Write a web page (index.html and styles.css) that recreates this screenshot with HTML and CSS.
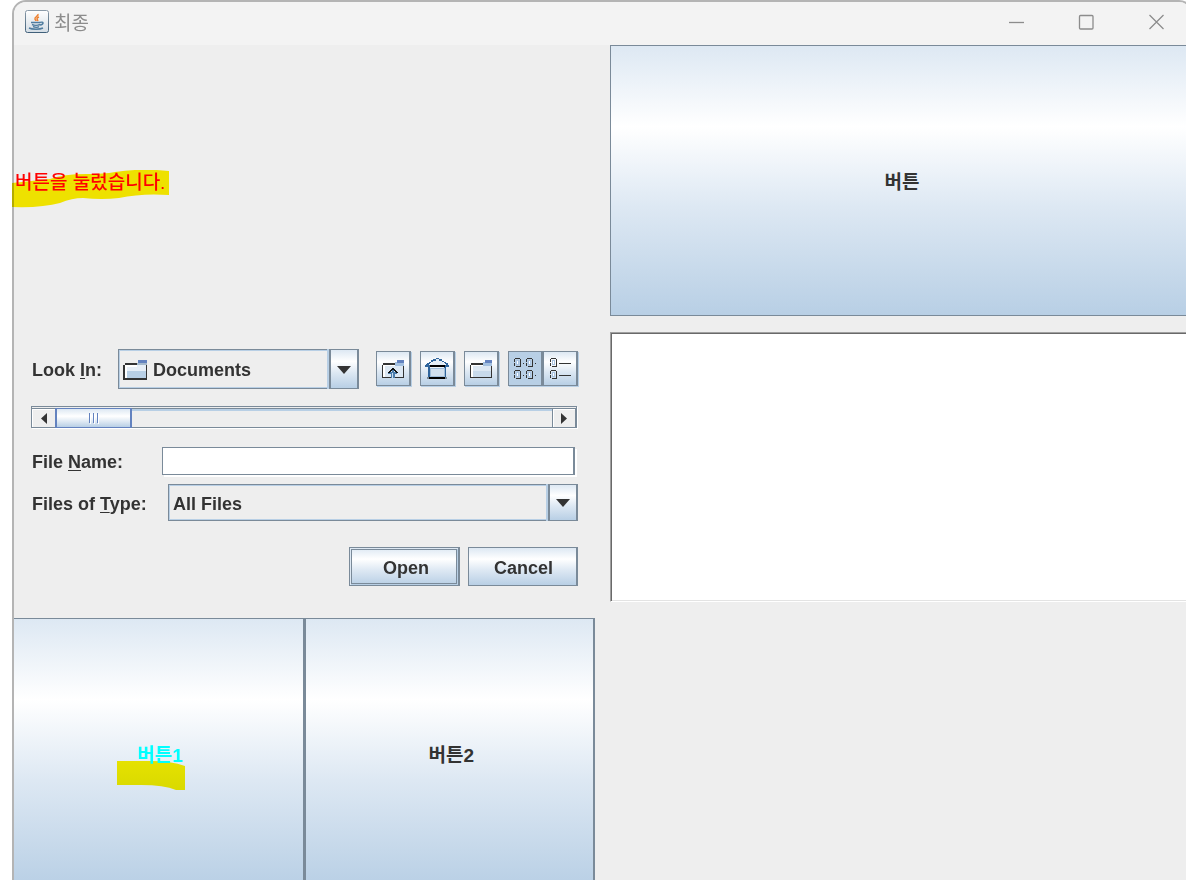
FILE: index.html
```
<!DOCTYPE html>
<html lang="ko">
  <head>
    <meta charset="UTF-8" />
    <meta name="viewport" content="width=device-width, initial-scale=1.0" />
    <title>최종</title>
    <link rel="stylesheet" href="styles.css">
  </head>

  <body>
    <div class="window">
      <header class="titlebar">
        <svg class="app-icon" width="24" height="24" viewBox="0 0 24 24" fill="none">
          <defs>
            <linearGradient id="tile" x1="0" y1="0" x2="0" y2="1">
              <stop offset="0" stop-color="#fff" />
              <stop offset="1" stop-color="#d3dce4" />
            </linearGradient>
            <linearGradient id="tileEdge" x1="0" y1="0" x2="0" y2="1">
              <stop offset="0" stop-color="#8a9aa8" />
              <stop offset="1" stop-color="#40607a" />
            </linearGradient>
          </defs>
          <rect x="0.5" y="0.5" width="23" height="22" rx="2" fill="url(#tile)" stroke="url(#tileEdge)" />
          <path d="M13 4c1 2-4 3-3 5 0 1 1 1 1 2M14 7c-3 1-2 2-1 4" stroke="#ee8130" stroke-width="1.5" />
          <path d="M6 12.500h9M7 14.500c2 1 6 1 8 0M8 16.500c2 1 5 1 6 0M15 12.500c4-1.500 4 2 0 2.500M4 18c3 1.500 11 1.500 14 0" stroke="#4f7c9f" stroke-width="1.500" />
        </svg>
        <h1 class="title">최종</h1>
        <div class="window-controls">
          <button type="button" aria-label="Minimize">
            <svg width="16" height="16" viewBox="0 0 16 16"><path d="M1 8.500h15" /></svg>
          </button>
          <button type="button" aria-label="Maximize">
            <svg width="16" height="16" viewBox="0 0 16 16"><rect x="1.500" y="1.500" width="13.500" height="13.500" rx="1" /></svg>
          </button>
          <button type="button" aria-label="Close">
            <svg width="16" height="16" viewBox="0 0 16 16"><path d="M1.500 1l14 14M15.500 1l-14 14" /></svg>
          </button>
        </div>
      </header>

      <main class="content">
        <div class="message">
          <svg class="marker marker-message" width="158" height="38" viewBox="0 0 158 38">
            <path d="M0 13L38 9Q52 4 74 4Q92 4 103 2Q130-2 157 1V25Q130 23 107 28Q90 30 71 28Q60 28 48 33Q30 38 0 37Z" />
          </svg>
          <p>버튼을 눌렀습니다.</p>
        </div>

        <button type="button" class="big-button">버튼</button>

        <form class="chooser">
          <div class="row row-look">
            <label for="look"><span>Look <u>I</u>n:</span></label>
            <div class="combo combo-look">
              <svg class="combo-icon" width="24" height="20" viewBox="0 0 24 20" shape-rendering="crispEdges">
                <rect x="2" y="5" width="21" height="13" fill="#e6eef7" />
                <path d="M3 11h20v7H3z" fill="#b8cfe5" />
                <path d="M2 5h12v2H4v11H2z" fill="#fff" />
                <path d="M2 3h12v2H2v13h21V5h1v15H0V5h2z" fill="#333" />
                <path d="M15 0h9v3h-9z" fill="#6382bf" />
                <path d="M14 3h10v2H14z" fill="#a3b8cc" />
              </svg>
              <select id="look">
                <option>Documents</option>
              </select>
              <span class="combo-arrow"></span>
            </div>
            <div class="tools">
              <button type="button" class="metal tool" aria-label="Up One Level">
                <svg width="22" height="18" viewBox="0 0 22 18" shape-rendering="crispEdges">
                  <path d="M1 5h20v12H1z" fill="#dde8f3" />
                  <path d="M1 5h13v1H3v11H1z" fill="#fff" />
                  <path d="M1 3h12v2H1zM0 5h1v12h8v1H0zM21 6h1v12h-9v-1h8z" fill="#333" />
                  <path d="M15 0h7v3h-7z" fill="#6382bf" />
                  <path d="M13 2h2v1h7v3h-9z" fill="#a3c0e0" />
                  <path d="M10 10h2v2h3v2h-2v4H9v-4H6v-2h4z" fill="#4b7cab" />
                  <path d="M10 13h1v5h-1z" fill="#c8ddef" />
                  <path d="M10 8h2v1h1v1h1v1h1v1h1v1h-2v-1h-1v-1h-1v-1h-2v1H9v1H8v1H6v-1h1v-1h1v-1h1V9h1z" fill="#111" />
                </svg>
              </button>
              <button type="button" class="metal tool" aria-label="Home">
                <svg width="24" height="21" viewBox="0 0 24 21" shape-rendering="crispEdges">
                  <path d="M10 1h5l5 6H5z" fill="#e4edf6" />
                  <path d="M11 0h3v1h-3zM8 1h3v2H8zM14 1h3v2h-3zM6 2h2v2H6zM17 3h2v1h-2zM4 4h2v1H4zM19 4h2v1h-2zM2 5h3v1H2zM20 5h3v1h-3zM1 6h3v1H1zM21 6h2v1h-2zM0 7h5v2H0zM20 7h4v2h-4zM3 9h2v10H3zM19 9h2v10h-2z" fill="#30659c" />
                  <path d="M5 10h14v8H5z" fill="#d1e0ee" stroke="#a0bedb" />
                  <path d="M5 7h15v2H5zM4 19h16v2H4z" fill="#000" />
                  <path d="M2 19h2v2H2zM20 19h2v2h-2z" fill="#7a8a99" />
                </svg>
              </button>
              <button type="button" class="metal tool" aria-label="Create New Folder">
                <svg width="22" height="18" viewBox="0 0 22 18" shape-rendering="crispEdges">
                  <path d="M1 5h20v12H1z" fill="#dde8f3" />
                  <path d="M3 11h18v6H3z" fill="#c8daeb" />
                  <path d="M1 5h13v1H3v11H1z" fill="#fff" />
                  <path d="M1 3h12v2H1zM0 5h1v12h20V6h1v12H0z" fill="#333" />
                  <path d="M15 0h7v3h-7z" fill="#6382bf" />
                  <path d="M13 2h2v1h7v3h-9z" fill="#a3c0e0" />
                </svg>
              </button>
              <div class="view-toggle">
                <button type="button" class="metal tool pressed" aria-label="List" aria-pressed="true">
                  <svg width="23" height="21" viewBox="0 0 23 21" shape-rendering="crispEdges">
                    <defs>
                      <g id="file">
                        <path d="M2 2h3v5H2z" fill="#a9c4e2" />
                        <path d="M3 3h1v3H3z" fill="#fff" />
                        <path d="M1 0h5v1H1zM0 1h1v3H0zM0 5h1v3H0zM6 1h1v7H6zM2 8h5v1H2z" fill="#333" />
                      </g>
                    </defs>
                    <use href="#file" />
                    <use href="#file" x="12" />
                    <use href="#file" y="12" />
                    <use href="#file" x="12" y="12" />
                    <path d="M9 5h1v1H9zM21 5h1v1h-1zM9 17h1v1H9zM21 17h1v1h-1z" fill="#333" />
                  </svg>
                </button>
                <button type="button" class="metal tool" aria-label="Details" aria-pressed="false">
                  <svg width="21" height="21" viewBox="0 0 21 21" shape-rendering="crispEdges">
                    <use href="#file" />
                    <use href="#file" y="12" />
                    <path d="M9 5h12v1H9zM9 17h12v1H9z" fill="#333" />
                  </svg>
                </button>
              </div>
            </div>
          </div>

          <div class="scrollbar">
            <button type="button" class="scroll-button" aria-label="Scroll left">
              <svg width="6" height="11" viewBox="0 0 6 11"><path d="M6 0v11L0 5.500z" /></svg>
            </button>
            <div class="track">
              <div class="thumb"><i></i><i></i><i></i></div>
            </div>
            <button type="button" class="scroll-button scroll-right" aria-label="Scroll right">
              <svg width="6" height="11" viewBox="0 0 6 11"><path d="M0 0v11l6-5.500z" /></svg>
            </button>
          </div>

          <div class="row row-name">
            <label for="name"><span>File <u>N</u>ame:</span></label>
            <input type="text" id="name" />
          </div>

          <div class="row row-type">
            <label for="type"><span>Files of <u>T</u>ype:</span></label>
            <div class="combo combo-type">
              <select id="type">
                <option>All Files</option>
              </select>
              <span class="combo-arrow"></span>
            </div>
          </div>

          <div class="actions">
            <button type="button" class="metal action default">Open</button>
            <button type="button" class="metal action">Cancel</button>
          </div>
        </form>

        <textarea class="editor" aria-label="텍스트"></textarea>

        <div class="button-pair">
          <button type="button" class="big-button clicked">
            <svg class="marker marker-button" width="68" height="30" viewBox="0 0 68 30">
              <path d="M0 0H34Q54 0 68 5V29H59Q47 24 24 24H0Z" />
            </svg>
            <span>버튼1</span>
          </button>
          <button type="button" class="big-button">버튼2</button>
        </div>
      </main>
    </div>
  </body>
</html>
```
FILE: styles.css
```
* {
  box-sizing: border-box;
}

body {
  margin: 0;
  height: 100vh;
  overflow: hidden;
  background: #fff;
  color: #333;
  font-family: "Liberation Sans", "Noto Sans CJK KR", sans-serif;
  font-size: 18px;
  font-weight: bold;
}

button,
input,
select,
textarea {
  margin: 0;
  padding: 0;
  border: 0;
  border-radius: 0;
  background: none;
  color: inherit;
  font: inherit;
}

/* The frame runs a little past the right and bottom edges of the screen */
.window {
  display: flex;
  flex-direction: column;
  height: calc(100vh + 11px);
  margin: 0 -7px 0 12px;
  border: 2px solid #b4b4b4;
  border-radius: 14px 14px 0 0;
  background: #eee;
}

.titlebar {
  display: flex;
  align-items: center;
  height: 43px;
  padding: 0 0 3px 11px;
  border-radius: 12px 12px 0 0;
  background: #f3f3f3;
}

.title {
  flex: 1;
  margin: 0 0 0 5px;
  color: #8c8c8c;
  font-family: "Noto Sans CJK KR", sans-serif;
  font-size: 19px;
  font-weight: 400;
  line-height: 24px;
}

.window-controls {
  display: flex;
}

.window-controls button {
  display: flex;
  align-items: center;
  justify-content: center;
  width: 70px;
  height: 40px;
}

.window-controls svg {
  fill: none;
  stroke: #8c8c8c;
  stroke-width: 1.3;
}

.content {
  display: grid;
  flex: 1;
  grid-template-columns: 1fr 1fr;
  grid-template-rows: repeat(3, minmax(0, 1fr));
  gap: 16px 15px;
}

.message {
  position: relative;
  display: flex;
  align-items: center;
  color: #f00;
  font-size: 19px;
  font-weight: 500;
}

.message p {
  position: relative;
  margin: 0;
  padding-left: 1px;
}

/* Highlighter strokes */
.marker {
  position: absolute;
  fill: #fff200;
  mix-blend-mode: multiply;
}

.marker-message {
  top: calc(50% - 10px);
  left: -2px;
}

.marker-button {
  top: calc(50% + 7px);
  left: 103px;
}

.metal,
.big-button,
.combo-arrow {
  border: 1px solid #7a8a99;
  border-right-width: 2px;
  background: linear-gradient(#dde8f3, #fff 30%, #dde8f3 60%, #b8cfe5);
}

.big-button {
  position: relative;
  padding-left: 4px;
  font-size: 19px;
  font-weight: 600;
}

.button-pair {
  display: grid;
  grid-template-columns: 1fr 1fr;
}

.button-pair .big-button:first-child {
  border-left: 0;
}

.clicked span {
  position: relative;
  color: #0ff;
}

.chooser {
  display: flex;
  flex-direction: column;
  padding: 17px 17px 0;
}

.row {
  display: flex;
  align-items: center;
  padding-left: 1px;
}

.row label {
  margin-right: 16px;
  padding-top: 4px;
  white-space: nowrap;
}

.row u {
  text-underline-offset: 2px;
  text-decoration-thickness: 1px;
}

.row-look {
  height: 40px;
}

.combo {
  position: relative;
  display: flex;
  flex: 1;
  align-items: center;
  min-width: 0;
  border: 1px solid #7a8a99;
  box-shadow: inset 1px 1px #b8cfe5, inset 0 -1px #b8cfe5;
}

.combo-look {
  height: 40px;
}

.combo-type {
  height: 37px;
}

.combo-icon {
  margin: 2px 0 0 4px;
}

.combo select {
  flex: 1;
  min-width: 0;
  height: 100%;
  padding: 3px 0 0 4px;
  appearance: none;
}

.combo-look select {
  padding-left: 6px;
}

.combo-arrow {
  position: absolute;
  top: -1px;
  right: -1px;
  bottom: -1px;
  width: 30px;
  border-left-width: 2px;
  box-shadow: -2px 0 #b8cfe5;
  pointer-events: none;
}

.combo-arrow::after {
  content: "";
  position: absolute;
  top: calc(50% - 3px);
  left: 6px;
  border: 7px solid transparent;
  border-top: 8px solid #333;
  border-bottom: 0;
}

.tools {
  display: flex;
  gap: 9px;
  margin-left: 17px;
}

.view-toggle {
  display: flex;
}

.tool {
  display: flex;
  align-items: center;
  justify-content: center;
  width: 35px;
  height: 35px;
  box-shadow: 1px 1px #b8cfe5;
}

.pressed {
  background: #b8cfe5;
}

.scrollbar {
  display: flex;
  height: 22px;
  margin: 17px 1px 0 0;
  padding-top: 1px;
  border: 1px solid #7a8a99;
  box-shadow: 1px 1px #fff;
}

.scroll-button {
  display: flex;
  align-items: center;
  justify-content: center;
  width: 23px;
  padding-top: 1px;
  border-top: 1px solid #7a8a99;
  box-shadow: inset 1px 1px #fff;
  fill: #333;
}

.scroll-right {
  width: 24px;
  border-right: 1px solid #7a8a99;
  border-left: 1px solid #7a8a99;
}

.track {
  flex: 1;
  border-top: 1px solid #7a8a99;
  box-shadow: inset 0 2px #b8cfe5;
}

.thumb {
  display: flex;
  align-items: center;
  justify-content: center;
  gap: 3px;
  width: 77px;
  height: calc(100% + 2px);
  margin-top: -1px;
  border: 2px solid #6382bf;
  border-width: 1px 2px;
  background: linear-gradient(#dde8f3, #fff 40%, #dde8f3 70%, #b8cfe5);
}

.thumb i {
  width: 1px;
  height: 10px;
  background: #6382bf;
  box-shadow: 1px 1px #fff;
}

.row-name {
  margin-top: 19px;
}

.row-name label {
  min-width: 114px;
}

.row-name input {
  flex: 1;
  min-width: 0;
  height: 28px;
  margin-right: 3px;
  padding: 0 4px;
  border: 1px solid #7a8a99;
  border-right-width: 2px;
  background: #fff;
  box-shadow: 2px 2px #fff;
}

.row-type {
  margin-top: 9px;
}

.row-type label {
  min-width: 120px;
}

.actions {
  display: flex;
  justify-content: flex-end;
  gap: 8px;
  margin-top: 26px;
}

.action {
  width: 110px;
  height: 39px;
  padding: 5px 0 0 2px;
}

.default {
  width: 111px;
  padding-left: 4px;
  box-shadow: inset 1px 1px #dde8f3, inset -1px -1px #b8cfe5, inset 2px 2px #7a8a99, inset -2px -2px #7a8a99;
}

.editor {
  display: block;
  width: 100%;
  height: 100%;
  padding: 4px;
  border: 1px solid #a0a0a0;
  border-right: 0;
  border-bottom-color: #fff;
  background: #fff;
  box-shadow: inset 1px 1px #696969, inset 0 -1px #e3e3e3;
  resize: none;
}
```
